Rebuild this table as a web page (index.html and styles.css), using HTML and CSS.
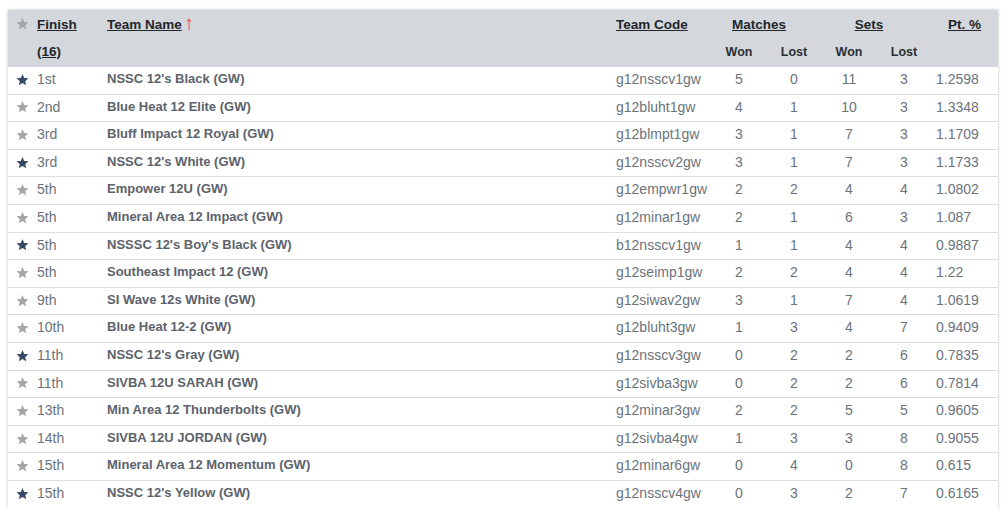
FILE: index.html
```html
<!DOCTYPE html>
<html>
<head>
<meta charset="utf-8">
<link rel="stylesheet" href="styles.css">
</head>
<body>
<div class="card">
<table class="standings">
<colgroup>
<col class="c-star"><col class="c-finish"><col class="c-name"><col class="c-code"><col class="c-mw"><col class="c-ml"><col class="c-sw"><col class="c-sl"><col class="c-pt">
</colgroup>
<thead>
<tr class="h1">
<th class="star-cell"><svg class="star off" viewBox="0 0 24 24"><path d="M12 1.8l3.1 7.3 7.9.7-6 5.2 1.8 7.7L12 18.6l-6.8 4.1 1.8-7.7-6-5.2 7.9-.7z"/></svg></th>
<th rowspan="2" class="finish-h"><a>Finish (16)</a></th>
<th class="left"><a>Team Name</a><svg class="sort" viewBox="0 0 6 12"><path d="M3 12V1.2M1 3.6L3 1.2l2 2.4" fill="none" stroke="currentColor" stroke-width="1.1"/></svg></th>
<th class="left"><a>Team Code</a></th>
<th colspan="2" class="group"><a>Matches</a></th>
<th colspan="2" class="group"><a>Sets</a></th>
<th class="right"><a>Pt. %</a></th>
</tr>
<tr class="h2">
<th></th>
<th></th>
<th></th>
<th class="center">Won</th>
<th class="center">Lost</th>
<th class="center">Won</th>
<th class="center">Lost</th>
<th></th>
</tr>
</thead>
<tbody id="rows"></tbody>
</table>
</div>
<script src="app.js"></script>
</body>
</html>
```
FILE: styles.css
```css
html, body { margin: 0; padding: 0; background: #fff; }
body { padding: 10px 8px 0 8px; font-family: "Liberation Sans", Arial, sans-serif; font-size: 14px; }
.card {
  width: 990px;
  box-shadow: 0 0 3px rgba(0,0,0,0.25);
}
.standings {
  width: 100%;
  border-collapse: collapse;
  table-layout: fixed;
  color: #6b737b;
}
.c-star { width: 25px; }
.c-finish { width: 70px; }
.c-name { width: 509px; }
.c-code { width: 100px; }
.c-mw { width: 54px; }
.c-ml { width: 56px; }
.c-sw { width: 54px; }
.c-sl { width: 56px; }
.c-pt { width: 66px; }
thead { background: #d4d8dc; }
th {
  font-weight: bold;
  color: #22262b;
  padding: 0 4px;
  height: 27.5px;
  line-height: 27.5px;
  vertical-align: middle;
  text-align: left;
  white-space: nowrap;
  font-size: 13.5px;
}
.h1 th { vertical-align: top; padding-top: 1px; }
.h2 th { padding-bottom: 1px; font-size: 12.5px; color: #2a2f35; }
th a { text-decoration: underline; color: #22262b; }
th.finish-h { white-space: normal; vertical-align: top; line-height: 27px; padding-top: 1px; }
th.center { text-align: center; }
th.group { text-align: center; padding-right: 20px; }
th.right { text-align: right; padding-right: 17px; }
.star-cell { padding: 0 0 0 8px; }
.star { width: 13px; height: 13px; display: block; }
.h1 .star { margin-top: 6px; }
.star.off { fill: #a3a7ab; }
.star.on { fill: #364a66; }
.sort { width: 6px; height: 12px; color: #e8604c; margin-left: 4px; vertical-align: -1px; }
td {
  border-top: 1px solid #dcdfe2;
  padding: 3px 4px 5px 4px;
  line-height: 18.6px;
  height: 18.6px;
  white-space: nowrap;
  vertical-align: middle;
}
tbody tr:first-child td { border-top: none; }
td.star-cell { padding: 3px 0 5px 8px; }
td.name { font-weight: bold; font-size: 13px; color: #5c636b; }
td.center { text-align: center; }
```
FILE: app.js
```js
var data = [
  [1,"1st","NSSC 12's Black (GW)","g12nsscv1gw",5,0,11,3,"1.2598"],
  [0,"2nd","Blue Heat 12 Elite (GW)","g12bluht1gw",4,1,10,3,"1.3348"],
  [0,"3rd","Bluff Impact 12 Royal (GW)","g12blmpt1gw",3,1,7,3,"1.1709"],
  [1,"3rd","NSSC 12's White (GW)","g12nsscv2gw",3,1,7,3,"1.1733"],
  [0,"5th","Empower 12U (GW)","g12empwr1gw",2,2,4,4,"1.0802"],
  [0,"5th","Mineral Area 12 Impact (GW)","g12minar1gw",2,1,6,3,"1.087"],
  [1,"5th","NSSSC 12's Boy's Black (GW)","b12nsscv1gw",1,1,4,4,"0.9887"],
  [0,"5th","Southeast Impact 12 (GW)","g12seimp1gw",2,2,4,4,"1.22"],
  [0,"9th","SI Wave 12s White (GW)","g12siwav2gw",3,1,7,4,"1.0619"],
  [0,"10th","Blue Heat 12-2 (GW)","g12bluht3gw",1,3,4,7,"0.9409"],
  [1,"11th","NSSC 12's Gray (GW)","g12nsscv3gw",0,2,2,6,"0.7835"],
  [0,"11th","SIVBA 12U SARAH (GW)","g12sivba3gw",0,2,2,6,"0.7814"],
  [0,"13th","Min Area 12 Thunderbolts (GW)","g12minar3gw",2,2,5,5,"0.9605"],
  [0,"14th","SIVBA 12U JORDAN (GW)","g12sivba4gw",1,3,3,8,"0.9055"],
  [0,"15th","Mineral Area 12 Momentum (GW)","g12minar6gw",0,4,0,8,"0.615"],
  [1,"15th","NSSC 12's Yellow (GW)","g12nsscv4gw",0,3,2,7,"0.6165"]
];
var star = '<svg class="star STATE" viewBox="0 0 24 24"><path d="M12 1.8l3.1 7.3 7.9.7-6 5.2 1.8 7.7L12 18.6l-6.8 4.1 1.8-7.7-6-5.2 7.9-.7z"/></svg>';
var html = "";
data.forEach(function (r) {
  html += '<tr>' +
    '<td class="star-cell">' + star.replace("STATE", r[0] ? "on" : "off") + '</td>' +
    '<td>' + r[1] + '</td>' +
    '<td class="name">' + r[2] + '</td>' +
    '<td>' + r[3] + '</td>' +
    '<td class="center">' + r[4] + '</td>' +
    '<td class="center">' + r[5] + '</td>' +
    '<td class="center">' + r[6] + '</td>' +
    '<td class="center">' + r[7] + '</td>' +
    '<td>' + r[8] + '</td>' +
    '</tr>';
});
document.getElementById("rows").innerHTML = html;
```
